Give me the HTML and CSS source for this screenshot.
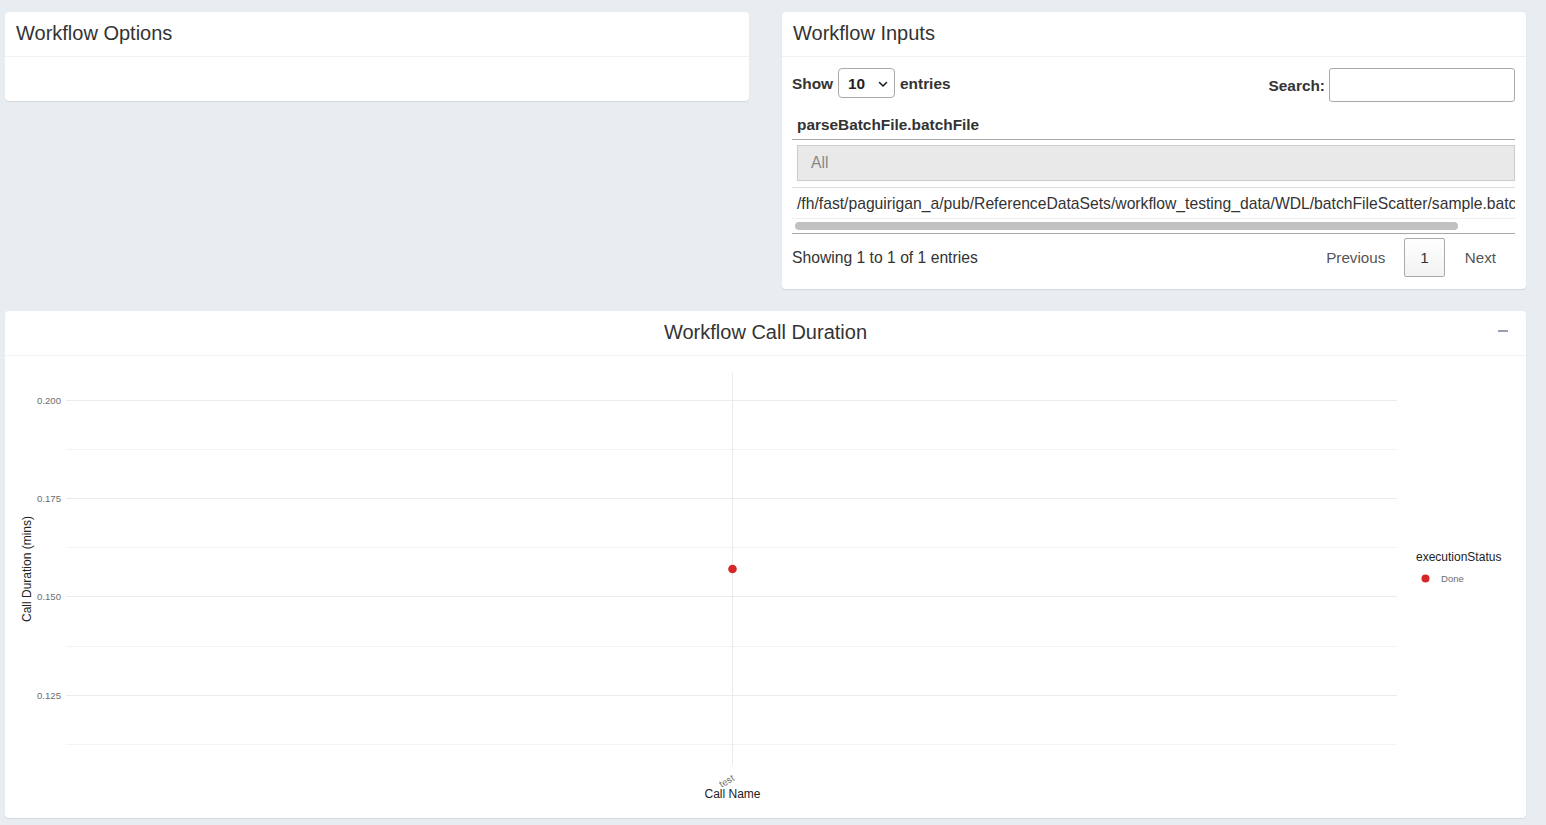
FILE: index.html
```html
<!DOCTYPE html>
<html lang="en">
<head>
<meta charset="utf-8">
<title>Workflow</title>
<link rel="stylesheet" href="styles.css">
</head>
<body>
<div class="page">
  <div class="top">
    <section class="card">
      <div class="card-header">Workflow Options</div>
      <div class="options-body"></div>
    </section>
    <section class="card">
      <div class="card-header">Workflow Inputs</div>
      <div class="inputs-body">
        <div class="controls">
          <div class="length">
            <span class="lbl">Show</span>
            <div class="select"><span>10</span>
              <svg width="10" height="7" viewBox="0 0 10 7"><path d="M1.5 1.5 L5 5 L8.5 1.5" fill="none" stroke="#222" stroke-width="1.6" stroke-linecap="round" stroke-linejoin="round"/></svg>
            </div>
            <span class="lbl">entries</span>
          </div>
          <div class="search">
            <span class="lbl">Search:</span>
            <div class="search-input"></div>
          </div>
        </div>
        <div class="table-wrap">
          <div class="th">parseBatchFile.batchFile</div>
          <div class="filter-row"><div class="filter-input">All</div></div>
          <div class="td">/fh/fast/paguirigan_a/pub/ReferenceDataSets/workflow_testing_data/WDL/batchFileScatter/sample.batchfile.txt</div>
          <div class="hscroll"><div class="thumb"></div></div>
        </div>
        <div class="footer">
          <div class="info">Showing 1 to 1 of 1 entries</div>
          <div class="pager">
            <span class="pbtn">Previous</span>
            <span class="pbtn current">1</span>
            <span class="pbtn">Next</span>
          </div>
        </div>
      </div>
    </section>
  </div>

  <section class="card chart-card">
    <div class="card-header centered">Workflow Call Duration
      <span class="minus"></span>
    </div>
    <div class="chart">
      <svg width="1521" height="462" viewBox="0 0 1521 462" xmlns="http://www.w3.org/2000/svg">
        <g stroke="#ebebeb" stroke-width="1">
          <line x1="61" x2="1392" y1="93.5" y2="93.5" stroke="#f3f3f3"/>
          <line x1="61" x2="1392" y1="191.5" y2="191.5" stroke="#f3f3f3"/>
          <line x1="61" x2="1392" y1="290.5" y2="290.5" stroke="#f3f3f3"/>
          <line x1="61" x2="1392" y1="388.5" y2="388.5" stroke="#f3f3f3"/>
          <line x1="61" x2="1392" y1="44.5" y2="44.5"/>
          <line x1="61" x2="1392" y1="142.5" y2="142.5"/>
          <line x1="61" x2="1392" y1="240.5" y2="240.5"/>
          <line x1="61" x2="1392" y1="339.5" y2="339.5"/>
          <line x1="727.5" x2="727.5" y1="17" y2="409"/>
        </g>
        <g class="tick" text-anchor="end">
          <text x="56" y="47.5">0.200</text>
          <text x="56" y="145.5">0.175</text>
          <text x="56" y="243.5">0.150</text>
          <text x="56" y="342.5">0.125</text>
        </g>
        <text class="axis-title" transform="translate(25.5 213) rotate(-90)" text-anchor="middle">Call Duration (mins)</text>
        <circle cx="727.5" cy="213" r="4.3" fill="#d62728"/>
        <text class="tick" transform="translate(730 424) rotate(-30)" text-anchor="end">test</text>
        <text class="axis-title" x="727.5" y="442" text-anchor="middle">Call Name</text>
        <text class="legend-title" x="1411" y="205">executionStatus</text>
        <circle cx="1420.5" cy="222.5" r="4" fill="#d62728"/>
        <text class="tick" x="1436" y="225.5">Done</text>
      </svg>
    </div>
  </section>
</div>
</body>
</html>
```
FILE: styles.css
```css
* { box-sizing: border-box; }
body {
  margin: 0;
  background: #e8edf1;
  font-family: "Liberation Sans", Arial, Helvetica, sans-serif;
  color: #333;
}
.page {
  padding: 12px 20px 7px 5px;
}
.top {
  display: flex;
  gap: 33px;
  align-items: flex-start;
  margin-bottom: 22px;
}
.top .card {
  flex: 1 1 0;
  min-width: 0;
}
.card {
  background: #fff;
  border-radius: 4px;
  box-shadow: 0 1px 1px rgba(0, 0, 0, 0.09);
}
.card-header {
  height: 45px;
  border-bottom: 1px solid #f1f1f1;
  padding: 0 11px 2px;
  display: flex;
  align-items: center;
  font-size: 20px;
  color: #333;
  position: relative;
}
.card-header.centered { justify-content: center; }
.minus {
  position: absolute;
  right: 18px;
  top: 19px;
  width: 10px;
  height: 2px;
  background: #97a0b3;
}
.options-body { height: 44px; }

.inputs-body {
  padding: 11px 11px 12px 10px;
}
.controls {
  display: flex;
  justify-content: space-between;
  align-items: flex-start;
  height: 34px;
}
.lbl {
  font-weight: bold;
  font-size: 15.4px;
  color: #333;
  padding-top: 2px;
}
.length {
  display: flex;
  align-items: center;
  height: 30px;
}
.search {
  display: flex;
  align-items: center;
  height: 34px;
}
.select {
  width: 57px;
  height: 30px;
  margin: 0 5px 0 5px;
  border: 1px solid #aaa;
  border-radius: 4px;
  display: flex;
  align-items: center;
  justify-content: space-between;
  padding: 2px 6px 0 9px;
  font-size: 15.4px;
  font-weight: bold;
  color: #222;
}
.search-input {
  width: 186px;
  height: 34px;
  margin-left: 4px;
  border: 1px solid #aaa;
  border-radius: 3px;
}
.table-wrap {
  margin-top: 2px;
  overflow: hidden;
}
.th {
  padding: 12px 5px 5px;
  font-weight: bold;
  font-size: 15.4px;
  line-height: 18px;
  border-bottom: 1px solid #a9a9a9;
}
.filter-row {
  padding: 5px 0 6px 5px;
  border-bottom: 1px solid #ddd;
}
.filter-input {
  height: 36px;
  background: #e9e9e9;
  border: 1px solid #ccc;
  padding-left: 13px;
  display: flex;
  align-items: center;
  font-size: 15.7px;
  color: #888;
}
.td {
  padding: 7px 5px 5px;
  font-size: 15.7px;
  line-height: 18px;
  white-space: nowrap;
  overflow: hidden;
  border-bottom: 1px solid #eee;
}
.hscroll {
  height: 15px;
  padding: 3px 0 0 3px;
  border-bottom: 1px solid #a9a9a9;
}
.thumb {
  width: 663px;
  height: 8px;
  background: #c1c1c1;
  border-radius: 4px;
}
.footer {
  margin-top: 4px;
  display: flex;
  justify-content: space-between;
  align-items: center;
  height: 39px;
}
.info {
  font-size: 15.7px;
  color: #333;
}
.pager {
  display: flex;
  align-items: center;
  font-size: 15.2px;
}
.pbtn {
  padding: 0 18px 0 19px;
  height: 39px;
  display: flex;
  align-items: center;
  color: #555;
  border: 1px solid transparent;
  border-radius: 2px;
}
.pbtn.current {
  padding: 0 15px;
  color: #333;
  border-color: #aaa;
  background: linear-gradient(#fff, #f2f2f2);
}

.chart { height: 462px; }
.chart svg { display: block; }
.tick {
  font-family: "Liberation Sans", Arial, sans-serif;
  font-size: 9.6px;
  fill: #6e6e6e;
}
.axis-title {
  font-family: "Liberation Sans", Arial, sans-serif;
  font-size: 12px;
  fill: #222;
}
.legend-title {
  font-family: "Liberation Sans", Arial, sans-serif;
  font-size: 12px;
  fill: #222;
}
```
